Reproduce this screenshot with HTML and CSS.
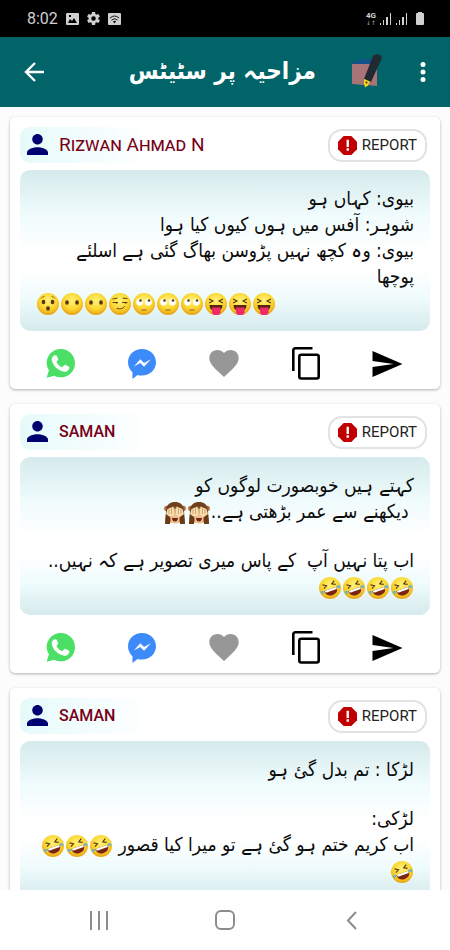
FILE: index.html
```html
<!doctype html>
<html lang="ur">
<head>
    <meta charset="UTF-8">
    <meta name="viewport" content="width=device-width, initial-scale=1.0">
    <title>مزاحیہ پر سٹیٹس</title>
    <link rel="stylesheet" href="styles.css">
</head>
<body>
    <!-- shared icons -->
    <svg class="sprite" aria-hidden="true">
        <defs>
            <radialGradient id="face" cx="50%" cy="35%" r="65%">
                <stop offset="0" stop-color="#fff27a"/>
                <stop offset="0.6" stop-color="#fbd630"/>
                <stop offset="1" stop-color="#e8a317"/>
            </radialGradient>
        </defs>
        <symbol id="person" viewBox="4 4 16 16">
            <path d="M12 12c2.200 0 4-1.800 4-4s-1.800-4-4-4-4 1.800-4 4 1.800 4 4 4zm0 2c-2.700 0-8 1.300-8 4v2h16v-2c0-2.700-5.300-4-8-4z"/>
        </symbol>
        <symbol id="alert" viewBox="0 0 20 20">
            <path fill="#c00000" d="M6 0h8l6 6v8l-6 6H6l-6-6V6z"/>
            <path fill="#fff" d="M9 4h2.500v7.500H9zM9 13h2.500v2.500H9z"/>
        </symbol>
        <symbol id="whatsapp" viewBox="0 0 88 88">
            <path fill="#4be065" d="M45 0C69 0 88 19 88 43S69 86 45 86c-8 0-14-2-20-5L2 87l7-23C5 58 2 51 2 43 2 19 21 0 45 0z"/>
            <path fill="#fff" d="M24 20c-5 4-8 9-6 16 4 17 20 31 38 33 8 1 14-5 15-13 0-2-12-8-14-8-3 1-5 6-8 7-7-2-14-9-17-15 0-3 5-5 5-8 0-2-4-12-6-13-2 0-5 0-7 1z"/>
        </symbol>
        <symbol id="messenger" viewBox="0 0 82 88">
            <path fill="#3d8bfa" d="M41 0c23 0 41 17 41 39S64 78 41 78c-5 0-9-1-13-2L13 88V68C5 61 0 51 0 39 0 17 18 0 41 0z"/>
            <path fill="#fff" d="M17 51l19-21 11 11 20-11-20 22-11-11z"/>
        </symbol>
        <symbol id="heart" viewBox="2 3 20 18.350">
            <path fill="#979797" d="M12 21.350l-1.450-1.320C5.400 15.360 2 12.280 2 8.500 2 5.420 4.420 3 7.500 3c1.740 0 3.410.81 4.500 2.090C13.090 3.810 14.760 3 16.500 3 19.580 3 22 5.420 22 8.500c0 3.780-3.400 6.860-8.550 11.540L12 21.350z"/>
        </symbol>
        <symbol id="copy" viewBox="0 0 28 33">
            <path fill="none" stroke="#000" stroke-width="2.600" d="M1.300 24V3.300a2 2 0 0 1 2-2H20.500"/>
            <rect x="7.300" y="7.700" width="19.400" height="23.800" rx="2" fill="none" stroke="#000" stroke-width="2.600"/>
        </symbol>
        <symbol id="send" viewBox="0 0 30 26">
            <path d="M0 26l30-13L0 0v10l21 3-21 3z"/>
        </symbol>

        <!-- faces -->
        <symbol id="hushed" viewBox="0 0 22 22">
            <circle cx="11" cy="11" r="11" fill="url(#face)"/>
            <g fill="#5a3512"><ellipse cx="6.500" cy="9" rx="1.800" ry="2.300"/><ellipse cx="15.500" cy="9" rx="1.800" ry="2.300"/><ellipse cx="11" cy="15.500" rx="1.900" ry="2.200"/></g>
            <path fill="none" stroke="#8a5a14" stroke-width=".8" d="M4 5.500q1-2 3.500-2M18 5.500q-1-2-3.500-2"/>
        </symbol>
        <symbol id="mouthless" viewBox="0 0 22 22">
            <circle cx="11" cy="11" r="11" fill="url(#face)"/>
            <g fill="#5a3512"><ellipse cx="6" cy="9.500" rx="1.800" ry="2.300"/><ellipse cx="16" cy="9.500" rx="1.800" ry="2.300"/></g>
        </symbol>
        <symbol id="smirk" viewBox="0 0 22 22">
            <circle cx="11" cy="11" r="11" fill="url(#face)"/>
            <path fill="none" stroke="#6b4012" stroke-linecap="round" d="M4 9.500h4.500M13.500 9.500H18M4 6l4-.8M14 5.200l4 .3M8 15.500q5 1.500 7.500-2"/>
            <path fill="#5a3512" d="M6 9.500h3q-1 2.300-3 0zM15 9.500h3q-1 2.300-3 0z"/>
        </symbol>
        <symbol id="eyeroll" viewBox="0 0 22 22">
            <circle cx="11" cy="11" r="11" fill="url(#face)"/>
            <g fill="#fff"><ellipse cx="6.500" cy="9" rx="3.300" ry="3.500"/><ellipse cx="15.500" cy="9" rx="3.300" ry="3.500"/></g>
            <g fill="#5a3512"><circle cx="7.500" cy="7.500" r="1.300"/><circle cx="16" cy="7.500" r="1.300"/></g>
            <path fill="none" stroke="#8a5a14" stroke-width="1" d="M8.500 17h5"/>
        </symbol>
        <symbol id="tongue" viewBox="0 0 22 22">
            <circle cx="11" cy="11" r="11" fill="url(#face)"/>
            <path fill="none" stroke="#5a3512" stroke-width="1.100" d="M4 6l4 2-4 2M18 6l-4 2 4 2"/>
            <path fill="#5a2410" d="M4.500 12h13q0 6-6.500 6t-6.500-6z"/>
            <path fill="#ee2a68" d="M7 14.500h8.500V19a3 3 0 0 1-3 3h-2.500a3 3 0 0 1-3-3z"/>
        </symbol>
        <symbol id="rofl" viewBox="0 0 22 22">
            <circle cx="11" cy="11" r="11" fill="url(#face)"/>
            <g transform="rotate(-20 11 11)">
                <path fill="none" stroke="#5a3512" stroke-width="1.100" d="M5 5.500l3.500 2.200L5 9.500M17.500 5.500L14 7.700l3.500 1.800"/>
                <path fill="#7a2414" d="M4.500 12h13.500q-.5 6.500-6.700 6.500T4.500 12z"/>
                <path fill="#fff" d="M5 12h12.500l-.5 2.200H5.600z"/>
                <path fill="#5ab4dc" d="M1 11.500q3-1 3 .5 0 2-2.500 2.500zM21 11.500q-3-1-3 .5 0 2 2.500 2.500z"/>
            </g>
        </symbol>
        <symbol id="monkey" viewBox="0 0 22 22">
            <circle cx="2.800" cy="6.500" r="2.700" fill="#b5713d"/><circle cx="19.200" cy="6.500" r="2.700" fill="#b5713d"/>
            <path fill="#70411c" d="M2 9C2 3 6 0 11 0s9 3 9 9v4H2z"/>
            <ellipse cx="11" cy="14" rx="8" ry="7.500" fill="#eebf8c"/>
            <path fill="#6b3b18" d="M1 22q0-5 1-12l4 3q1 5 0 9zM21 22q0-5-1-12l-4 3q-1 5 0 9z"/>
            <path fill="#f8dcae" d="M2 12l1.500-5L9.500 4.500l1.300 8L6 15zM20 12l-1.500-5-6-2.500-1.300 8L16 15z"/>
            <path fill="none" stroke="#b98650" stroke-width=".6" d="M5 7v5M7.500 6v6M17 7v5M14.500 6v6M11 5v7"/>
            <path fill="#782015" d="M8 16h6q-.5 3.500-3 3.500T8 16z"/>
        </symbol>
    </svg>

    <div class="status-bar">
        <span class="time">8:02</span>
        <svg width="13" height="12" viewBox="0 0 13 12"><path fill="#d0d0d0" fill-rule="evenodd" d="M1 0h11a1 1 0 0 1 1 1v10a1 1 0 0 1-1 1H1a1 1 0 0 1-1-1V1a1 1 0 0 1 1-1zm1 10h9L8 5 6 8 4 6zM3 2v2h2V2z"/></svg>
        <svg width="13" height="13" viewBox="2 2 20 20"><path fill="#d0d0d0" d="M19.430 12.980c.04-.32.07-.64.07-.98s-.03-.66-.07-.98l2.110-1.650c.19-.15.24-.42.12-.64l-2-3.460c-.12-.22-.39-.3-.61-.22l-2.490 1c-.52-.4-1.080-.73-1.690-.98l-.38-2.650C14.460 2.180 14.250 2 14 2h-4c-.25 0-.46.18-.49.42l-.38 2.650c-.61.25-1.170.59-1.690.98l-2.490-1c-.23-.09-.49 0-.61.22l-2 3.460c-.13.22-.07.49.12.64l2.110 1.650c-.04.32-.07.65-.07.98s.03.66.07.98l-2.110 1.650c-.19.15-.24.42-.12.64l2 3.460c.12.22.39.3.61.22l2.490-1c.52.4 1.080.73 1.690.98l.38 2.650c.03.24.24.42.49.42h4c.25 0 .46-.18.49-.42l.38-2.650c.61-.25 1.170-.59 1.690-.98l2.490 1c.23.09.49 0 .61-.22l2-3.460c.12-.22.07-.49-.12-.64zM12 15.500A3.500 3.500 0 1 1 12 8.500a3.500 3.500 0 0 1 0 7z"/></svg>
        <svg width="13" height="12" viewBox="0 0 13 12"><rect width="13" height="12" rx="1" fill="#d0d0d0"/><path fill="none" stroke="#111" d="M2 5q4.500-4 9 0M3.500 7q3-2.500 6 0"/><path d="M5 8.200q1.500-1 3 0L6.500 10.500z"/></svg>
        <div class="signal">
            <span class="network">4G<small>↓↑</small></span>
            <svg width="12" height="13" viewBox="0 0 12 13"><path fill="#d0d0d0" d="M0 11h1v2H0zM3 8h1v5H3zM6 5h2v8H6zM10 1h1v12h-1z"/></svg>
            <svg width="12" height="13" viewBox="0 0 12 13"><path fill="#d0d0d0" d="M0 11h1v2H0zM3 8h1v5H3zM6 5h2v8H6zM10 1h1v12h-1z"/></svg>
            <svg class="battery" width="8" height="13" viewBox="0 0 8 13"><path fill="#d0d0d0" d="M2 0h4v1h1a1 1 0 0 1 1 1v10a1 1 0 0 1-1 1H1a1 1 0 0 1-1-1V2a1 1 0 0 1 1-1h1z"/></svg>
        </div>
    </div>

    <header class="app-bar">
        <button class="icon-button" aria-label="Back">
            <svg width="20" height="20" viewBox="0 0 20 20"><path fill="none" stroke="#fff" stroke-width="2.400" d="M20 10H2M11 1l-9 9 9 9"/></svg>
        </button>
        <h1 dir="rtl">مزاحیہ پر سٹیٹس</h1>
        <button class="icon-button write" aria-label="Write">
            <svg width="30" height="36" viewBox="0 0 30 36">
                <path fill="#12518a" d="M0 10L4 6l21-2v8H0z"/>
                <path fill="#a87478" d="M0 10h25v22L0 30z"/>
                <path fill="#202a30" d="M21 2q3-3 7-1 3 2 1 5L19 28l-7-3z"/>
                <path fill="#f4d21a" d="M12 25l6 2.500-2 4-3 2-1-4z"/>
                <circle cx="14.500" cy="28.500" r="1" fill="#4a3a00"/>
            </svg>
        </button>
        <button class="icon-button" aria-label="Menu">
            <svg width="6" height="20" viewBox="0 0 6 20"><g fill="#fff"><circle cx="3" cy="2.500" r="2.500"/><circle cx="3" cy="10" r="2.500"/><circle cx="3" cy="17.500" r="2.500"/></g></svg>
        </button>
    </header>

    <main class="feed">
        <article class="card">
            <div class="card-header">
                <div class="author">
                    <svg class="avatar"><use href="#person"/></svg>
                    <span class="name">Rizwan Ahmad N</span>
                </div>
                <button class="report"><svg><use href="#alert"/></svg>REPORT</button>
            </div>
            <div class="message" dir="rtl">
                <p>بیوی: کہاں ہو</p>
                <p>شوہر: آفس میں ہوں کیوں کیا ہوا</p>
                <p>بیوی: وہ کچھ نہیں پڑوسن بھاگ گئی ہے اسلئے<br>پوچھا</p>
                <p dir="ltr"><svg class="emoji"><use href="#hushed"/></svg><svg class="emoji"><use href="#mouthless"/></svg><svg class="emoji"><use href="#mouthless"/></svg><svg class="emoji"><use href="#smirk"/></svg><svg class="emoji"><use href="#eyeroll"/></svg><svg class="emoji"><use href="#eyeroll"/></svg><svg class="emoji"><use href="#eyeroll"/></svg><svg class="emoji"><use href="#tongue"/></svg><svg class="emoji"><use href="#tongue"/></svg><svg class="emoji"><use href="#tongue"/></svg></p>
            </div>
            <div class="actions">
                <button aria-label="WhatsApp"><svg width="29" height="29"><use href="#whatsapp"/></svg></button>
                <button aria-label="Messenger"><svg width="28" height="30"><use href="#messenger"/></svg></button>
                <button aria-label="Like"><svg width="30" height="27"><use href="#heart"/></svg></button>
                <button aria-label="Copy"><svg width="28" height="33"><use href="#copy"/></svg></button>
                <button aria-label="Share"><svg width="31" height="26"><use href="#send"/></svg></button>
            </div>
        </article>

        <article class="card">
            <div class="card-header">
                <div class="author">
                    <svg class="avatar"><use href="#person"/></svg>
                    <span class="name short">SAMAN</span>
                </div>
                <button class="report"><svg><use href="#alert"/></svg>REPORT</button>
            </div>
            <div class="message" dir="rtl">
                <p>کہتے ہیں خوبصورت لوگوں کو</p>
                <p>&nbsp;دیکھنے سے عمر بڑھتی ہے..<svg class="emoji"><use href="#monkey"/></svg><svg class="emoji"><use href="#monkey"/></svg></p>
                <p class="blank"></p>
                <p>اب پتا نہیں آپ&nbsp; کے پاس میری تصویر ہے کہ نہیں..</p>
                <p><svg class="emoji"><use href="#rofl"/></svg><svg class="emoji"><use href="#rofl"/></svg><svg class="emoji"><use href="#rofl"/></svg><svg class="emoji"><use href="#rofl"/></svg></p>
            </div>
            <div class="actions">
                <button aria-label="WhatsApp"><svg width="29" height="29"><use href="#whatsapp"/></svg></button>
                <button aria-label="Messenger"><svg width="28" height="30"><use href="#messenger"/></svg></button>
                <button aria-label="Like"><svg width="30" height="27"><use href="#heart"/></svg></button>
                <button aria-label="Copy"><svg width="28" height="33"><use href="#copy"/></svg></button>
                <button aria-label="Share"><svg width="31" height="26"><use href="#send"/></svg></button>
            </div>
        </article>

        <article class="card">
            <div class="card-header">
                <div class="author">
                    <svg class="avatar"><use href="#person"/></svg>
                    <span class="name short">SAMAN</span>
                </div>
                <button class="report"><svg><use href="#alert"/></svg>REPORT</button>
            </div>
            <div class="message" dir="rtl">
                <p>لڑکا : تم بدل گئ ہو</p>
                <p class="blank"></p>
                <p>لڑکی:</p>
                <p>اب کریم ختم ہو گئ ہے تو میرا کیا قصور <svg class="emoji"><use href="#rofl"/></svg><svg class="emoji"><use href="#rofl"/></svg><svg class="emoji"><use href="#rofl"/></svg><br><svg class="emoji"><use href="#rofl"/></svg></p>
            </div>
        </article>
    </main>

    <nav class="nav-bar">
        <button aria-label="Recents"><svg width="18" height="19" viewBox="0 0 18 19"><path fill="none" stroke="#8c8c8c" stroke-width="2" d="M1 0v19M9 0v19M17 0v19"/></svg></button>
        <button aria-label="Home"><svg width="20" height="20" viewBox="0 0 20 20"><rect x="1" y="1" width="18" height="18" rx="5" fill="none" stroke="#8c8c8c" stroke-width="2"/></svg></button>
        <button aria-label="Back"><svg width="11" height="19" viewBox="0 0 11 19"><path fill="none" stroke="#8c8c8c" stroke-width="2" d="M10 1L2 9.500l8 8.500"/></svg></button>
    </nav>
</body>
</html>
```
FILE: styles.css
```css
:root {
    --teal: #006468;
    --author-color: #780016;
    --border-color: #e2e2e2;
    --urdu-font: "DejaVu Sans Condensed", "DejaVu Sans", sans-serif;
}

* {
    box-sizing: border-box;
}

body {
    margin: 0;
    height: 100vh;
    display: flex;
    flex-direction: column;
    font-family: Roboto, "DejaVu Sans", sans-serif;
    background: #fcfcfc;
    color: #0c0c0c;
}

button {
    display: flex;
    align-items: center;
    justify-content: center;
    padding: 0;
    border: none;
    background: none;
    font-family: inherit;
    color: inherit;
    cursor: pointer;
}

p {
    margin: 0;
}

.sprite {
    position: absolute;
    width: 0;
    height: 0;
}

.status-bar {
    display: flex;
    flex-shrink: 0;
    align-items: center;
    gap: 8px;
    height: 37px;
    padding: 0 26px 0 27px;
    background: #000;
    color: #d0d0d0;
}

.time {
    font-size: 16px;
}

.signal {
    display: flex;
    align-items: center;
    gap: 4px;
    margin-left: auto;
}

.network {
    font-size: 8px;
    line-height: 7px;
    font-weight: 700;
    text-align: center;
}

.network small {
    display: block;
    font-size: 6px;
    color: #888;
}

.battery {
    margin-left: 4px;
}

.app-bar {
    display: flex;
    flex-shrink: 0;
    align-items: center;
    height: 70px;
    padding: 0 24px;
    background: var(--teal);
}

.app-bar h1 {
    flex: 1;
    margin: 0;
    padding-right: 36px;
    padding-bottom: 2px;
    font-family: var(--urdu-font);
    font-size: 24px;
    font-weight: 700;
    line-height: 32px;
    color: #fff;
    text-align: right;
    white-space: nowrap;
}

.write {
    margin-right: 38px;
}

.feed {
    flex: 1;
    min-height: 0;
    padding: 10px;
    overflow-y: auto;
    scrollbar-width: none;
}

.card {
    margin-bottom: 15px;
    padding: 10px 10px 0;
    background: #fff;
    border-radius: 5px;
    box-shadow: 0 1px 3px rgba(0, 0, 0, 0.3);
}

.card-header {
    display: flex;
    align-items: center;
    justify-content: space-between;
    height: 36px;
    margin-bottom: 7px;
    padding-right: 3px;
    border-radius: 10px;
    background: linear-gradient(to right, #e6fafa, #fff 130px);
}

.author {
    display: flex;
    align-items: center;
    gap: 11px;
    padding-left: 7px;
    padding-bottom: 2px;
}

.avatar {
    width: 21px;
    height: 21px;
    fill: #000070;
}

.name {
    padding-top: 2px;
    font-size: 19px;
    line-height: 24px;
    font-variant: small-caps;
    color: var(--author-color);
}

.name.short {
    font-size: 16px;
    font-weight: 500;
}

.report {
    gap: 5px;
    height: 33px;
    padding: 0 8px;
    border: 2px solid var(--border-color);
    border-radius: 14px;
    background: #fff;
    font-size: 15px;
    color: #222;
}

.report svg {
    width: 19px;
    height: 19px;
}

.message {
    padding: 15px 16px 16px;
    border-radius: 10px;
    background: linear-gradient(#d5eaec, #effbfc 27%, #fff 50%, #fff 62%, #effbfc 80%, #d5eaec);
    font-family: var(--urdu-font);
    font-size: 19px;
    line-height: 26px;
}

.message p {
    min-height: 26px;
    white-space: nowrap;
}

.message .blank {
    min-height: 23px;
}

.emoji {
    width: 22px;
    height: 22px;
    margin: 0 1px;
    vertical-align: middle;
}

.actions {
    display: grid;
    grid-template-columns: repeat(5, 1fr);
    height: 58px;
    padding-top: 7px;
    padding-right: 2px;
}

.nav-bar {
    display: grid;
    flex-shrink: 0;
    grid-template-columns: repeat(3, 1fr);
    height: 60px;
    padding: 0 36px;
    background: #fff;
}
```
